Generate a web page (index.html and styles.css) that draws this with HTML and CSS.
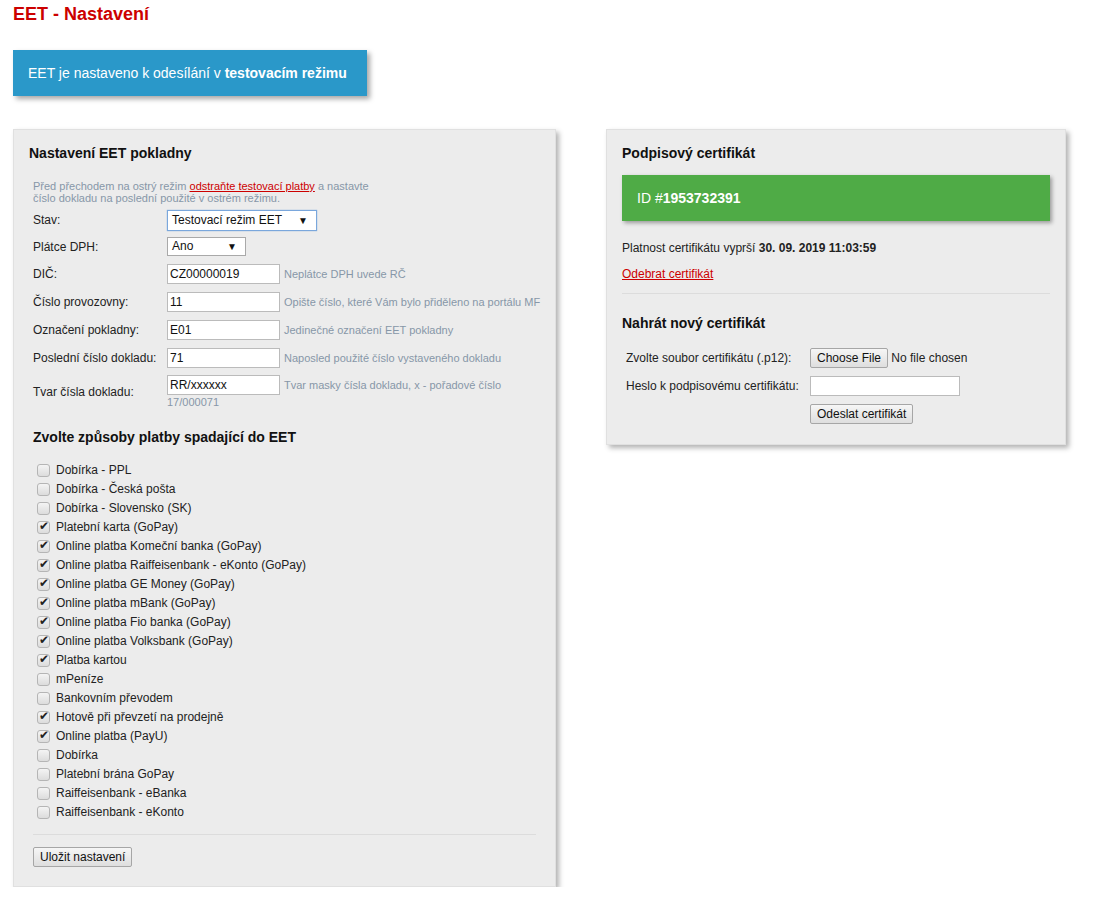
FILE: index.html
```html
<!DOCTYPE html>
<html lang="cs">
<head>
    <meta charset="UTF-8">
    <title>EET - Nastavení</title>
    <link rel="stylesheet" href="styles.css">
</head>
<body>
    <h1 class="page-title">EET - Nastavení</h1>

    <div class="mode-box">EET je nastaveno k odesílání v <strong>testovacím režimu</strong></div>

    <div class="panels">
        <div class="panel panel-left">
            <h2 class="panel-title">Nastavení EET pokladny</h2>
            <div class="panel-body">
                <p class="notice">Před přechodem na ostrý režim <a href="#">odstraňte testovací platby</a> a nastavte<br>číslo dokladu na poslední použité v ostrém režimu.</p>

                <div class="form-row row-stav">
                    <label>Stav:</label>
                    <span class="select select-focus w-150">Testovací režim EET</span>
                </div>
                <div class="form-row row-dph">
                    <label>Plátce DPH:</label>
                    <span class="select w-79">Ano</span>
                </div>
                <div class="form-row">
                    <label>DIČ:</label>
                    <input type="text" value="CZ00000019">
                    <span class="hint">Neplátce DPH uvede RČ</span>
                </div>
                <div class="form-row">
                    <label>Číslo provozovny:</label>
                    <input type="text" value="11">
                    <span class="hint">Opište číslo, které Vám bylo přiděleno na portálu MF</span>
                </div>
                <div class="form-row">
                    <label>Označení pokladny:</label>
                    <input type="text" value="E01">
                    <span class="hint">Jedinečné označení EET pokladny</span>
                </div>
                <div class="form-row">
                    <label>Poslední číslo dokladu:</label>
                    <input type="text" value="71">
                    <span class="hint">Naposled použité číslo vystaveného dokladu</span>
                </div>
                <div class="form-row form-row-tall">
                    <label>Tvar čísla dokladu:</label>
                    <div class="field-stack">
                        <div class="field-line">
                            <input type="text" value="RR/xxxxxx">
                            <span class="hint">Tvar masky čísla dokladu, x - pořadové číslo</span>
                        </div>
                        <span class="hint">17/000071</span>
                    </div>
                </div>

                <h3 class="section-title">Zvolte způsoby platby spadající do EET</h3>

                <ul class="pay-list">
                    <li><input type="checkbox"> Dobírka - PPL</li>
                    <li><input type="checkbox"> Dobírka - Česká pošta</li>
                    <li><input type="checkbox"> Dobírka - Slovensko (SK)</li>
                    <li><input type="checkbox" checked> Platební karta (GoPay)</li>
                    <li><input type="checkbox" checked> Online platba Komeční banka (GoPay)</li>
                    <li><input type="checkbox" checked> Online platba Raiffeisenbank - eKonto (GoPay)</li>
                    <li><input type="checkbox" checked> Online platba GE Money (GoPay)</li>
                    <li><input type="checkbox" checked> Online platba mBank (GoPay)</li>
                    <li><input type="checkbox" checked> Online platba Fio banka (GoPay)</li>
                    <li><input type="checkbox" checked> Online platba Volksbank (GoPay)</li>
                    <li><input type="checkbox" checked> Platba kartou</li>
                    <li><input type="checkbox"> mPeníze</li>
                    <li><input type="checkbox"> Bankovním převodem</li>
                    <li><input type="checkbox" checked> Hotově při převzetí na prodejně</li>
                    <li><input type="checkbox" checked> Online platba (PayU)</li>
                    <li><input type="checkbox"> Dobírka</li>
                    <li><input type="checkbox"> Platební brána GoPay</li>
                    <li><input type="checkbox"> Raiffeisenbank - eBanka</li>
                    <li><input type="checkbox"> Raiffeisenbank - eKonto</li>
                </ul>

                <hr class="divider">
                <button class="btn">Uložit nastavení</button>
            </div>
        </div>

        <div class="panel panel-right">
            <h2 class="panel-title">Podpisový certifikát</h2>
            <div class="cert-box">ID #<strong>1953732391</strong></div>
            <p class="cert-expiry">Platnost certifikátu vyprší <strong>30. 09. 2019 11:03:59</strong></p>
            <a class="cert-remove" href="#">Odebrat certifikát</a>
            <hr class="divider divider-right">
            <h2 class="panel-title upload-title">Nahrát nový certifikát</h2>
            <div class="upload-form">
                <div class="upload-row">
                    <label>Zvolte soubor certifikátu (.p12):</label>
                    <div class="file-field"><button class="btn">Choose File</button> No file chosen</div>
                </div>
                <div class="upload-row">
                    <label>Heslo k podpisovému certifikátu:</label>
                    <input type="password" class="pass-input">
                </div>
                <div class="upload-row upload-row-last">
                    <label></label>
                    <button class="btn">Odeslat certifikát</button>
                </div>
            </div>
        </div>
    </div>
</body>
</html>
```

FILE: styles.css
```css
body {
    margin: 0;
    padding: 0 13px;
    font-family: "Liberation Sans", Arial, sans-serif;
    font-size: 12px;
    color: #222;
    background: #fff;
}
.page-title {
    margin: 3px 0 0;
    font-size: 18px;
    line-height: 22px;
    color: #cc0000;
}
.mode-box {
    display: inline-block;
    margin-top: 25px;
    padding: 0 20px 0 15px;
    height: 46px;
    line-height: 46px;
    font-size: 14px;
    color: #fff;
    background-color: #2a98c9;
    box-shadow: 3px 3px 5px rgba(0,0,0,0.35);
}
.panels {
    display: flex;
    align-items: flex-start;
    gap: 50px;
    margin-top: 33px;
}
.panel {
    box-sizing: border-box;
    background-color: #ececec;
    border: 1px solid #e0e0e0;
    box-shadow: 3px 3px 5px rgba(0,0,0,0.3);
    padding: 14px 15px 19px;
}
.panel-left {
    width: 543px;
}
.panel-right {
    width: 460px;
    padding-bottom: 20px;
}
.panel-title {
    margin: 0;
    font-size: 14px;
    line-height: 18px;
    color: #111;
}
.panel-body {
    padding: 0 4px;
}
.notice {
    margin: 18px 0 3px;
    font-size: 11px;
    line-height: 12px;
    color: #8797a8;
}
.notice a {
    color: #cc0000;
}
.form-row {
    display: flex;
    align-items: center;
    height: 28px;
}
.row-stav {
    height: 26px;
}
.row-dph {
    height: 27px;
}
.form-row label {
    width: 134px;
    flex: none;
}
.form-row input[type="text"] {
    box-sizing: border-box;
    width: 113px;
    height: 20px;
    margin: 0;
    padding: 1px 2px;
    border: 1px solid #bbb;
    background: #fff;
    font-family: inherit;
    font-size: 12px;
    color: #111;
}
.hint {
    margin-left: 4px;
    font-size: 11px;
    color: #8797a8;
    white-space: nowrap;
}
.form-row-tall {
    height: auto;
    padding: 3px 0 1px;
}
.field-line {
    display: flex;
    align-items: center;
}
.field-stack > .hint {
    display: block;
    margin: 1px 0 0;
    line-height: 12px;
}
.select {
    position: relative;
    box-sizing: border-box;
    display: inline-block;
    height: 19px;
    line-height: 17px;
    padding: 0 4px;
    border: 1px solid #a9a9a9;
    background: #fff;
    color: #111;
}
.select::after {
    content: "▼";
    position: absolute;
    right: 8px;
    top: 0;
    font-size: 10px;
}
.select-focus {
    height: 21px;
    line-height: 19px;
    border-color: #7aa7dc;
    box-shadow: 0 0 1px #7aa7dc;
}
.w-150 { width: 150px; }
.w-79 { width: 79px; }
.section-title {
    margin: 19px 0 15px;
    font-size: 14px;
    line-height: 18px;
    color: #111;
}
.pay-list {
    list-style: none;
    margin: 0;
    padding: 0;
}
.pay-list li {
    height: 19px;
    line-height: 19px;
    display: flex;
    align-items: center;
}
.pay-list input {
    appearance: none;
    position: relative;
    box-sizing: border-box;
    width: 13px;
    height: 13px;
    margin: 0 6px 0 4px;
    border: 1px solid #b5b5b5;
    border-radius: 3px;
    background: linear-gradient(#f4f4f4, #dcdcdc);
}
.pay-list input:checked::before {
    content: "✔";
    position: absolute;
    left: 1px;
    top: -3px;
    font-size: 12px;
    color: #222;
}
.divider {
    border: none;
    border-top: 1px solid #dcdcdc;
    margin: 12px 0 12px;
}
.btn {
    margin: 0;
    padding: 1px 6px;
    height: 20px;
    font-family: inherit;
    font-size: 12px;
    color: #111;
    background: linear-gradient(#f6f6f6, #dedede);
    border: 1px solid #a6a6a6;
    border-radius: 2px;
}
.cert-box {
    margin-top: 13px;
    height: 46px;
    line-height: 46px;
    padding: 0 15px;
    font-size: 14px;
    color: #fff;
    background-color: #4fab46;
    box-shadow: 2px 2px 4px rgba(0,0,0,0.35);
}
.cert-expiry {
    margin: 20px 0 0;
    line-height: 15px;
}
.cert-remove {
    display: inline-block;
    margin-top: 11px;
    color: #cc0000;
}
.divider-right {
    margin: 12px 0 20px;
}
.upload-title {
    margin-bottom: 12px;
}
.upload-form {
    padding-left: 4px;
}
.upload-row {
    display: flex;
    align-items: center;
    height: 28px;
}
.upload-row-last {
    height: 24px;
    align-items: flex-end;
}
.upload-row label {
    width: 184px;
    flex: none;
}
.pass-input {
    box-sizing: border-box;
    width: 150px;
    height: 20px;
    margin: 0;
    border: 1px solid #bbb;
    background: #fff;
}
```
